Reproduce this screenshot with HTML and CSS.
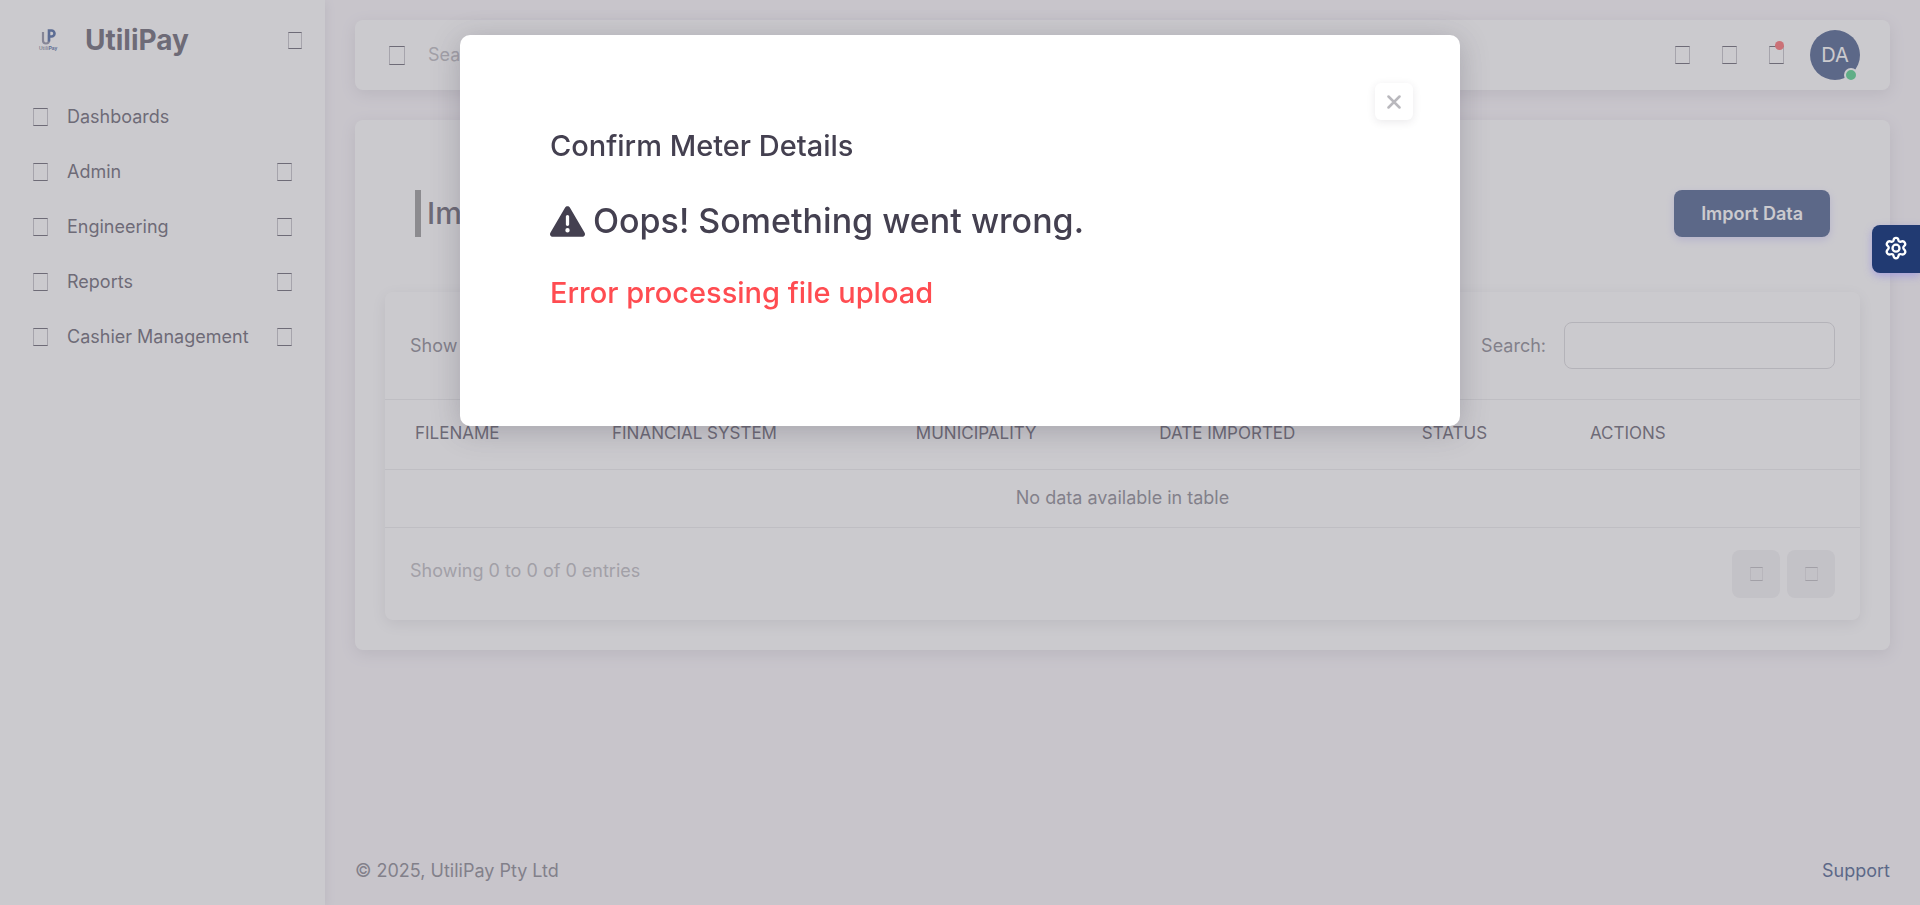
FILE: index.html
```html
<!DOCTYPE html>
<html lang="en">
<head>
<meta charset="utf-8">
<title>UtiliPay</title>
<link rel="stylesheet" href="styles.css">
</head>
<body>
<div class="layout">
  <aside class="sidebar">
    <div class="brand">
      <svg class="brand-logo" viewBox="0 0 21 25" aria-hidden="true">
        <path d="M5 4v8.500a3 3 0 0 0 6 0V7" fill="none" stroke="#74778f" stroke-width="2.200"/>
        <path d="M11 13.500V2.500h2.500a3 3 0 0 1 0 6H11" fill="none" stroke="#23458a" stroke-width="2.600"/>
        <text x="1" y="22" class="logo-text"><tspan fill="#74778f">Utili</tspan><tspan fill="#23458a">Pay</tspan></text>
      </svg>
      <span class="brand-name">UtiliPay</span>
      <button class="bare" aria-label="Toggle menu"><span class="glyph glyph-sm"></span></button>
    </div>
    <nav class="menu">
      <a class="menu-item" href="#"><span class="glyph"></span><span class="menu-label">Dashboards</span></a>
      <a class="menu-item" href="#"><span class="glyph"></span><span class="menu-label">Admin</span><span class="glyph"></span></a>
      <a class="menu-item" href="#"><span class="glyph"></span><span class="menu-label">Engineering</span><span class="glyph"></span></a>
      <a class="menu-item" href="#"><span class="glyph"></span><span class="menu-label">Reports</span><span class="glyph"></span></a>
      <a class="menu-item" href="#"><span class="glyph"></span><span class="menu-label">Cashier Management</span><span class="glyph"></span></a>
    </nav>
  </aside>

  <div class="page">
    <header class="navbar">
      <span class="glyph glyph-lg"></span>
      <input class="nav-search" type="search" placeholder="Search" aria-label="Search">
      <div class="nav-actions">
        <button class="bare" aria-label="Theme"><span class="glyph"></span></button>
        <button class="bare" aria-label="Shortcuts"><span class="glyph"></span></button>
        <button class="bare" aria-label="Notifications"><span class="glyph"></span><span class="badge"></span></button>
        <button class="avatar" aria-label="Account">DA<span class="status"></span></button>
      </div>
    </header>

    <main class="card">
      <div class="card-head">
        <h1 class="title">Import Data</h1>
        <button class="primary">Import Data</button>
      </div>
      <section class="panel">
        <div class="panel-row">
          <span>Show</span>
          <label class="filter">Search:<input class="filter-input" type="search"></label>
        </div>
        <table class="table">
          <thead>
            <tr><th class="c1">Filename</th><th class="c2">Financial System</th><th class="c3">Municipality</th><th class="c4">Date Imported</th><th class="c5">Status</th><th class="c6">Actions</th></tr>
          </thead>
          <tbody>
            <tr><td colspan="6">No data available in table</td></tr>
          </tbody>
        </table>
        <div class="panel-foot">
          <span class="muted">Showing 0 to 0 of 0 entries</span>
          <div class="pager">
            <button class="page-btn" aria-label="Previous" disabled><span class="glyph glyph-xs"></span></button>
            <button class="page-btn" aria-label="Next" disabled><span class="glyph glyph-xs"></span></button>
          </div>
        </div>
      </section>
    </main>

    <footer class="footer">
      <span>© 2025, UtiliPay Pty Ltd</span>
      <a href="#">Support</a>
    </footer>
  </div>
</div>

<div class="backdrop">
  <div class="modal" role="dialog" aria-labelledby="modal-title">
    <button class="close" aria-label="Close">
      <svg width="14" height="14" viewBox="0 0 14 14"><path d="M1.500 1.500l11 11M12.500 1.500l-11 11" stroke="#b9b8bd" stroke-width="2.500" stroke-linecap="round"/></svg>
    </button>
    <h3 class="modal-title" id="modal-title">Confirm Meter Details</h3>
    <h2 class="modal-alert">
      <svg class="warn" viewBox="0 0 512 512" aria-hidden="true"><path fill="currentColor" d="M256 32c14.200 0 27.300 7.500 34.500 19.800l216 368c7.300 12.400 7.300 27.700.2 40.100S486.300 480 472 480H40c-14.300 0-27.600-7.700-34.700-20.100s-7-27.800.2-40.100l216-368C228.700 39.500 241.800 32 256 32zm0 128c-13.300 0-24 10.700-24 24v112c0 13.300 10.700 24 24 24s24-10.700 24-24V184c0-13.300-10.700-24-24-24zm32 224a32 32 0 1 0-64 0 32 32 0 1 0 64 0z"/></svg>
      Oops! Something went wrong.
    </h2>
    <p class="modal-error">Error processing file upload</p>
  </div>
</div>

<button class="settings" aria-label="Settings">
  <svg width="28" height="28" viewBox="0 0 24 24" fill="none" stroke="#fff" stroke-width="2" stroke-linecap="round" stroke-linejoin="round"><path d="M12 2.500c1.300 0 1.900.8 2.100 2 .2 1 1.200 1.500 2.100 1.200 1.300-.5 2.500-.5 3.300.8.800 1.300.4 2.300-.6 3.100-.9.800-.9 1.900 0 2.700 1 .9 1.500 1.900.7 3.200-.8 1.300-1.900 1.500-3.200 1-1-.4-2 .2-2.200 1.200-.2 1.300-.9 2.300-2.200 2.300s-2-1-2.200-2.300c-.2-1-1.200-1.600-2.200-1.200-1.300.5-2.400.3-3.200-1-.8-1.300-.3-2.300.7-3.200.9-.8.9-1.900 0-2.700-1-.8-1.400-1.800-.6-3.100.8-1.300 2-1.300 3.300-.8.900.3 1.900-.2 2.100-1.200.2-1.200.8-2 2.100-2z"/><circle cx="12" cy="11.300" r="3"/></svg>
</button>
</body>
</html>
```

FILE: styles.css
```css
* { box-sizing: border-box; }

body {
  margin: 0;
  background: #f8f4f9;
  color: #6d6b77;
  font: 18px/28px Inter, "Liberation Sans", sans-serif;
}

h1, h2, h3, p { margin: 0; }
a { text-decoration: none; color: #213a72; }
button, input { font: inherit; color: inherit; }
button { border: 0; padding: 0; }

.layout { display: flex; min-height: 100vh; }

.bare { display: flex; position: relative; background: none; }

/* Placeholder box for icons */
.glyph {
  flex: none;
  width: 15px;
  height: 18px;
  border: 1px solid #b4b3ba;
  border-top-color: #444050;
  border-bottom-color: #444050;
}
.glyph-sm { width: 14px; height: 17px; }
.glyph-lg { width: 16px; height: 19px; }
.glyph-xs { width: 13px; height: 14px; border-color: #acaab1 #d8d7db; }

.sidebar {
  flex: none;
  width: 325px;
  background: #fff;
  box-shadow: 0 2px 10px rgba(47, 43, 61, .14);
}
.brand { display: flex; align-items: center; height: 80px; padding: 0 23px 0 38px; }
.brand-logo { width: 21px; height: 25px; overflow: visible; }
.logo-text { font: bold 5px "Liberation Sans", sans-serif; }
.brand-name {
  flex: 1;
  margin-left: 26px;
  color: #444050;
  font-size: 28px;
  font-weight: 700;
}

.menu { display: flex; flex-direction: column; gap: 8px; padding: 13px 15px; }
.menu-item {
  display: flex;
  align-items: center;
  height: 47px;
  padding: 0 18px;
  color: #444050;
}
.menu-label { flex: 1; margin-left: 19px; white-space: nowrap; }

.page { flex: 1; display: flex; flex-direction: column; min-width: 0; padding: 20px 30px 0; }

.navbar, .card, .panel {
  background: #fff;
  border-radius: 8px;
  box-shadow: 0 4px 15px rgba(47, 43, 61, .14);
}
.navbar { display: flex; align-items: center; height: 70px; padding: 0 30px 0 34px; }
.nav-search { flex: 1; margin-left: 23px; padding: 0; border: 0; background: none; }
.nav-search::placeholder { color: #acaab1; opacity: 1; }
.nav-actions { display: flex; align-items: center; gap: 32px; }
.badge {
  position: absolute;
  top: -5px;
  right: 0;
  width: 9px;
  height: 9px;
  border-radius: 50%;
  background: #ff4c51;
}
.avatar {
  position: relative;
  width: 50px;
  height: 50px;
  margin-left: -6px;
  border-radius: 50%;
  background: #213a72;
  color: #fff;
  font-size: 20px;
}
.status {
  position: absolute;
  right: 2px;
  bottom: -2px;
  width: 14px;
  height: 14px;
  border: 2px solid #fff;
  border-radius: 50%;
  background: #28c76f;
}

.card { margin-top: 30px; padding: 70px 30px 30px; }
.card-head { display: flex; justify-content: space-between; padding: 0 30px; }
.title {
  padding-left: 6px;
  border-left: 6px solid #808080;
  color: #444050;
  font-size: 30px;
  font-weight: 500;
  line-height: 47px;
}
.primary {
  height: 47px;
  padding: 0 27px;
  border-radius: 8px;
  background: #213a72;
  color: #fff;
  font-weight: 600;
  box-shadow: 0 3px 8px rgba(115, 103, 240, .3);
}

.panel { margin-top: 55px; }
.panel-row {
  display: flex;
  align-items: center;
  justify-content: space-between;
  padding: 30px 25px;
}
.filter { display: flex; align-items: center; gap: 18px; }
.filter-input {
  width: 271px;
  height: 47px;
  border: 1px solid #d1d0d4;
  border-radius: 8px;
  background: none;
}

.table { width: 100%; border-collapse: collapse; table-layout: fixed; }
.table th {
  height: 70px;
  padding: 0 22px 3px;
  border-top: 1px solid #e6e6e8;
  border-bottom: 1px solid #e6e6e8;
  color: #444050;
  font-size: 17px;
  font-weight: 400;
  text-align: left;
  text-transform: uppercase;
  white-space: nowrap;
}
.table th:first-child { padding-left: 30px; }
.table td { height: 58px; padding: 0 0 2px; border-bottom: 1px solid #e6e6e8; text-align: center; }
.c1 { width: 13.900%; }
.c2 { width: 20.600%; }
.c3 { width: 16.500%; }
.c4 { width: 17.800%; }
.c5 { width: 11.400%; }
.c6 { width: 19.800%; }

.panel-foot { display: flex; justify-content: space-between; padding: 22px 25px; }
.muted { line-height: 42px; color: #acaab1; }
.pager { display: flex; gap: 7px; }
.page-btn {
  display: flex;
  align-items: center;
  justify-content: center;
  width: 48px;
  height: 48px;
  border-radius: 8px;
  background: #efeef0;
}

.footer { display: flex; justify-content: space-between; margin-top: auto; padding: 21px 0 20px; }

.backdrop {
  position: fixed;
  inset: 0;
  display: flex;
  align-items: flex-start;
  justify-content: center;
  padding: 35px;
  background: rgba(151, 149, 158, .5);
}
.modal {
  position: relative;
  width: 1000px;
  padding: 90px 90px 112px;
  border-radius: 10px;
  background: #fff;
  color: #444050;
  box-shadow: 0 5px 30px rgba(47, 43, 61, .24);
}
.close {
  position: absolute;
  top: 48px;
  right: 47px;
  display: flex;
  align-items: center;
  justify-content: center;
  width: 38px;
  height: 37px;
  border-radius: 6px;
  background: #fff;
  box-shadow: 0 2px 8px rgba(47, 43, 61, .1);
}
.modal-title { font-size: 29px; font-weight: 500; line-height: 42px; }
.modal-alert {
  display: flex;
  align-items: center;
  gap: 8px;
  margin-top: 27px;
  font-size: 34px;
  font-weight: 500;
  line-height: 54px;
}
.warn { width: 35px; height: 35px; }
.modal-error { margin-top: 24px; color: #ff4c51; font-size: 29px; font-weight: 500; line-height: 42px; }

.settings {
  position: fixed;
  top: 225px;
  right: 0;
  display: flex;
  align-items: center;
  justify-content: center;
  width: 48px;
  height: 48px;
  border-radius: 8px 0 0 8px;
  background: #213a72;
  box-shadow: 0 3px 8px rgba(115, 103, 240, .4);
}
```
